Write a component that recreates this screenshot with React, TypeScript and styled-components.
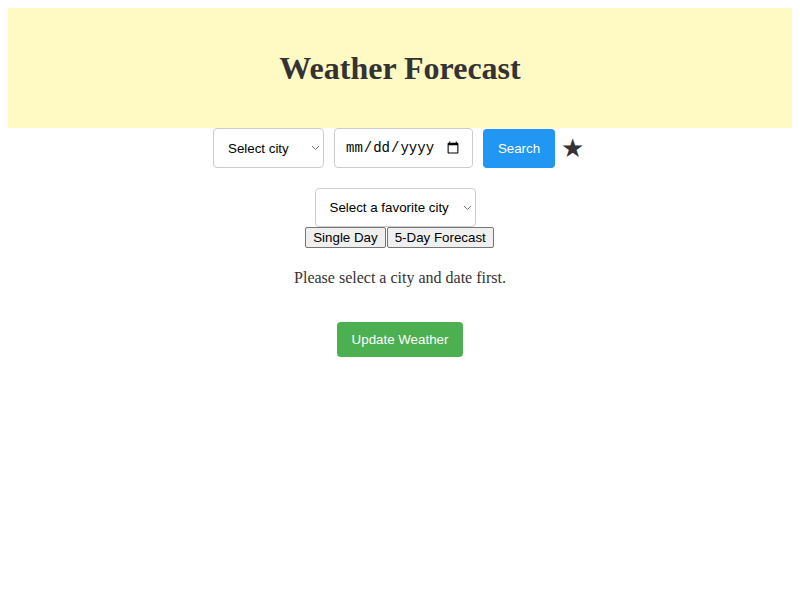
import React from "react";
import styled, { createGlobalStyle } from "styled-components";

const Global = createGlobalStyle`
  body {
    margin: 8px;
    background: #ffffff;
    font-family: "Liberation Serif", "Times New Roman", serif;
    color: #333333;
  }
`;

const Page = styled.div`
  display: flex;
  flex-direction: column;
  align-items: center;
`;

const Header = styled.header`
  align-self: stretch;
  background: #fff9c4;
  padding: 20px;
  text-align: center;
`;

const Title = styled.h1`
  margin: 21.5px 0;
  font-family: "Liberation Serif", "Times New Roman", serif;
  font-size: 32px;
  line-height: 37px;
  font-weight: bold;
  color: #333333;
`;

const SearchRow = styled.div`
  display: flex;
  align-items: center;
  justify-content: center;
  padding-right: 4px;
`;

const SelectWrap = styled.div<{ $mr: number }>`
  position: relative;
  display: inline-flex;
  margin-right: ${(p) => p.$mr}px;
`;

const Select = styled.select<{ $w: number; $h: number }>`
  appearance: none;
  -webkit-appearance: none;
  width: ${(p) => p.$w}px;
  height: ${(p) => p.$h}px;
  padding: 0 20px 0 14px;
  border: 1px solid #cccccc;
  border-radius: 4px;
  background: #ffffff;
  color: #000000;
  font-family: "Liberation Sans", Arial, sans-serif;
  font-size: 13.33px;
  box-sizing: border-box;
`;

const Chevron = styled.svg`
  position: absolute;
  right: 4px;
  top: 50%;
  margin-top: -3px;
  pointer-events: none;
`;

const DateInput = styled.input`
  width: 139px;
  height: 40px;
  margin-right: 10px;
  padding: 0 10px;
  border: 1px solid #cccccc;
  border-radius: 4px;
  background: #ffffff;
  color: #000000;
  font-family: "Liberation Mono", "Courier New", monospace;
  font-size: 14px;
  box-sizing: border-box;
`;

const ActionButton = styled.button<{ $bg: string }>`
  background: ${(p) => p.$bg};
  color: #ffffff;
  border: none;
  border-radius: 4px;
  font-family: "Liberation Sans", Arial, sans-serif;
  font-size: 13.33px;
  cursor: pointer;
`;

const SearchButton = styled(ActionButton)`
  width: 72px;
  height: 39px;
  padding: 0;
  margin-right: 6px;
`;

const Star = styled.span`
  font-family: "DejaVu Sans", sans-serif;
  font-size: 26px;
  line-height: 1;
  color: #333333;
  width: 22px;
  text-align: center;
`;

const FavRow = styled.div`
  margin-top: 20px;
  display: flex;
  justify-content: center;
`;

const ModeRow = styled.div`
  display: flex;
  justify-content: center;
`;

const ModeButton = styled.button`
  font-family: "Liberation Sans", Arial, sans-serif;
  font-size: 13.33px;
  height: 21px;
  padding: 1px 7px;
  margin-right: 1px;
  background: #efefef;
  color: #000000;
  border: 1px solid #767676;
  border-radius: 2px;
  box-sizing: border-box;
`;

const Message = styled.p`
  margin: 21px 0 16px;
  font-size: 16px;
  line-height: 18px;
  color: #333333;
`;

const UpdateButton = styled(ActionButton)`
  margin-top: 19px;
  height: 35px;
  padding: 0 15px;
`;

function SelectBox(props: { w: number; h: number; mr: number; label: string }) {
  return (
    <SelectWrap $mr={props.mr}>
      <Select $w={props.w} $h={props.h} defaultValue="">
        <option value="">{props.label}</option>
      </Select>
      <Chevron width="9" height="6" viewBox="0 0 9 6">
        <path d="M1 1l3.5 3.5L8 1" fill="none" stroke="#777" strokeWidth="1" />
      </Chevron>
    </SelectWrap>
  );
}

export default function App() {
  return (
    <>
      <Global />
      <Page>
        <Header>
          <Title>Weather Forecast</Title>
        </Header>
        <SearchRow>
          <SelectBox w={111} h={40} mr={10} label="Select city" />
          <DateInput type="date" />
          <SearchButton $bg="#2196f3">Search</SearchButton>
          <Star>★</Star>
        </SearchRow>
        <FavRow>
          <SelectBox w={161} h={39} mr={10} label="Select a favorite city" />
        </FavRow>
        <ModeRow>
          <ModeButton>Single Day</ModeButton>
          <ModeButton>5-Day Forecast</ModeButton>
        </ModeRow>
        <Message>Please select a city and date first.</Message>
        <UpdateButton $bg="#4caf50">Update Weather</UpdateButton>
      </Page>
    </>
  );
}
